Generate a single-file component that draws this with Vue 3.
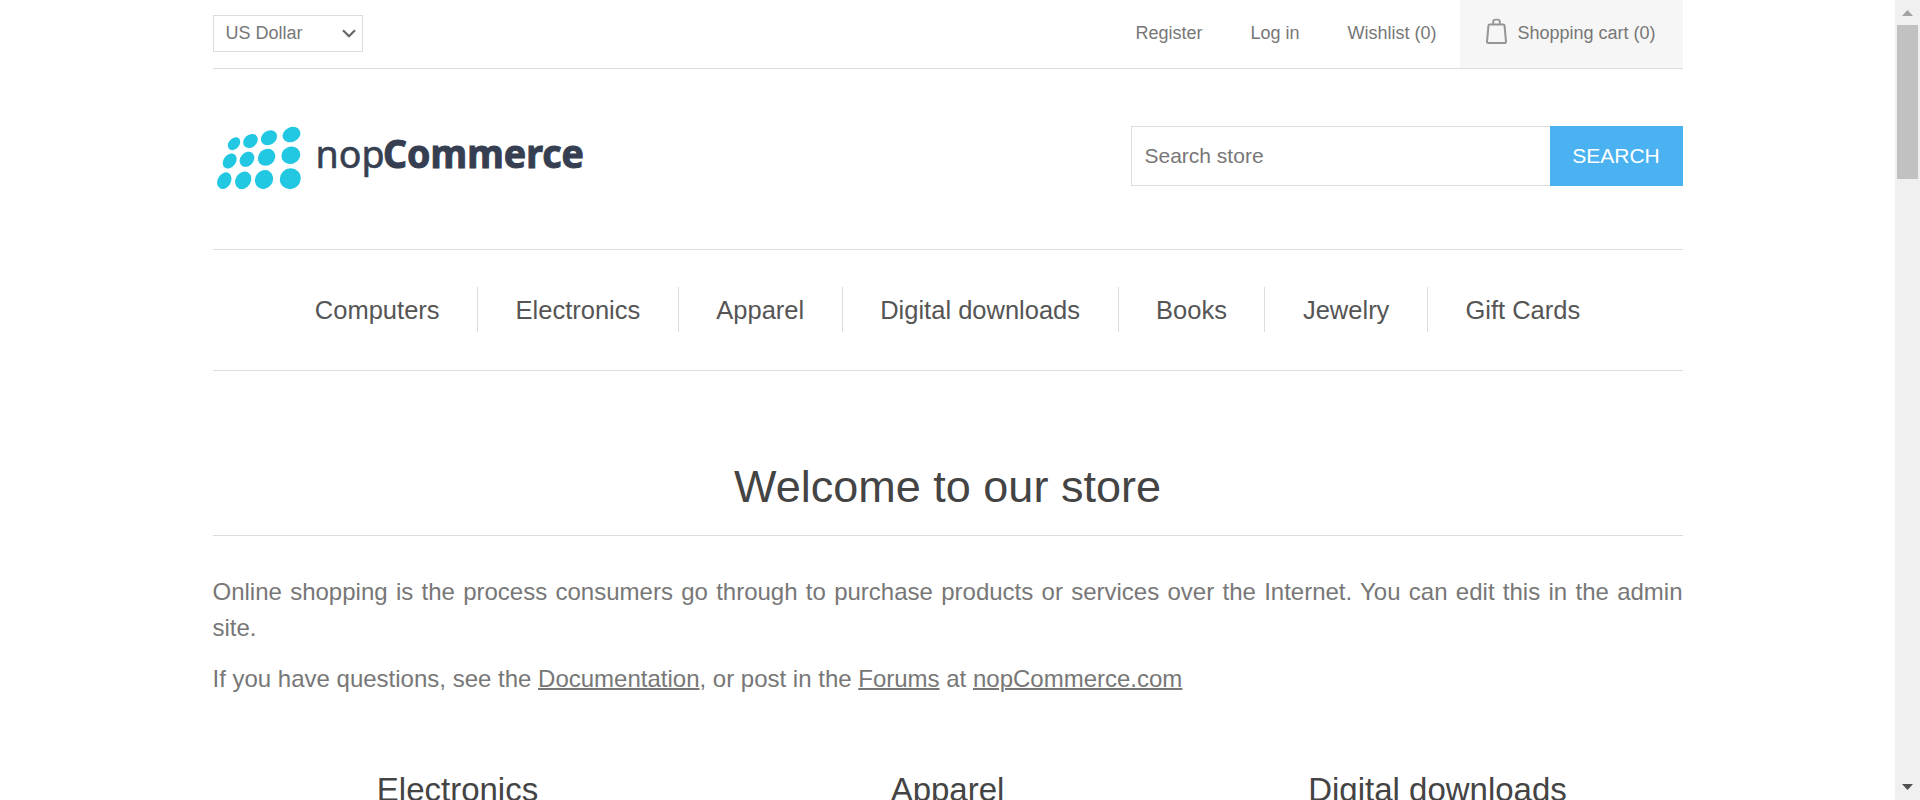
<script setup>
const links = ['Register', 'Log in', 'Wishlist (0)']
const menu = ['Computers', 'Electronics', 'Apparel', 'Digital downloads', 'Books', 'Jewelry', 'Gift Cards']
const categories = ['Electronics', 'Apparel', 'Digital downloads']
const dots = [
  [34, 143.7, 5.3, 7.2, 42], [50.5, 141, 6.3, 8, 48], [69, 137.8, 7, 8.6, 55], [91.5, 134.6, 7.4, 9.2, 65],
  [29.7, 161, 6.1, 8.2, 38], [47, 159.3, 6.6, 8.3, 42], [66.6, 157.3, 8, 9.2, 48], [90.8, 155.3, 8.5, 9.6, 65],
  [24.3, 180.7, 6.6, 8.8, 30], [43.2, 180.3, 7.6, 9.3, 32], [64, 179.5, 8.8, 9.8, 35], [90.3, 178.7, 10.2, 10.7, 45],
]
</script>

<template>
  <div class="window">
    <div class="viewport">
      <div class="page">
        <header class="top">
          <div class="currency">
            <span>US Dollar</span>
            <svg width="14" height="9" viewBox="0 0 14 9"><path d="M1 1.2 7 7.2 13 1.2" fill="none" stroke="#666" stroke-width="2.2" /></svg>
          </div>
          <nav class="links">
            <a v-for="l in links" :key="l">{{ l }}</a>
            <a class="cart">
              <svg width="21" height="28" viewBox="0 0 21 28" fill="none" stroke="#959595">
                <path d="M3.6 7.4H17.4Q18.4 7.4 18.5 8.4L20 24.8Q20 26 18.8 26H2.2Q1 26 1 24.8L2.5 8.4Q2.6 7.4 3.6 7.4Z" stroke-width="2" />
                <path d="M7.2 7V4.8Q7.2 2.6 9.4 2.6H11.6Q13.8 2.6 13.8 4.8V7" stroke-width="1.9" />
              </svg>
              <span>Shopping cart (0)</span>
            </a>
          </nav>
        </header>
        <div class="brand">
          <svg class="logo" width="375" height="75" viewBox="0 120 375 75">
            <ellipse v-for="(d, i) in dots" :key="i" :cx="d[0] - 13" :cy="d[1]" :rx="d[2]" :ry="d[3]" :transform="`rotate(${d[4]} ${d[0] - 13} ${d[1]})`" fill="#22c7e2" />
            <text class="nop" x="102.5" y="167.8" textLength="69" lengthAdjust="spacingAndGlyphs">nop</text>
            <text class="commerce" x="170" y="167.8" textLength="201" lengthAdjust="spacingAndGlyphs">Commerce</text>
          </svg>
          <div class="search">
            <div class="field">Search store</div>
            <div class="go">SEARCH</div>
          </div>
        </div>
        <nav class="menu">
          <div v-for="m in menu" :key="m" class="item">{{ m }}</div>
        </nav>
        <h1>Welcome to our store</h1>
        <div class="copy">
          <p>Online shopping is the process consumers go through to purchase products or services over the Internet. You can edit this in the admin site.</p>
          <p>If you have questions, see the <a>Documentation</a>, or post in the <a>Forums</a> at <a>nopCommerce.com</a></p>
        </div>
        <div class="cats">
          <h2 v-for="c in categories" :key="c">{{ c }}</h2>
        </div>
      </div>
    </div>
    <div class="scrollbar">
      <svg width="11" height="6" viewBox="0 0 11 6"><path d="M5.5 0 11 6H0Z" fill="#a3a3a3" /></svg>
      <div class="thumb"></div>
      <svg class="down" width="11" height="6" viewBox="0 0 11 6"><path d="M0 0H11L5.5 6Z" fill="#505050" /></svg>
    </div>
  </div>
</template>

<style>
html, body { overflow: hidden; background: #fff; }
</style>

<style scoped>
* { box-sizing: border-box; }
.window { display: flex; height: 800px; overflow: hidden; font-family: "Liberation Sans", Arial, sans-serif; font-size: 21px; color: #777; }
.viewport { width: 1895px; padding-left: 212.5px; overflow: hidden; }
.page { width: 1470px; }
.top { height: 69px; border-bottom: 1px solid #ddd; display: flex; justify-content: space-between; font-size: 18px; }
.currency { width: 150px; height: 37px; margin-top: 15px; border: 1px solid #ddd; padding: 0 6px 0 12px; display: flex; align-items: center; justify-content: space-between; }
.links { display: flex; line-height: 66px; gap: 48px; white-space: nowrap; }
.cart { display: flex; width: 223px; height: 68px; margin-left: -25px; padding-left: 26.5px; background: #f6f6f6; gap: 10.5px; }
.cart svg { margin-top: 17px; }
.brand { height: 181px; border-bottom: 1px solid #ddd; display: flex; justify-content: space-between; padding-top: 51px; }
.logo { display: block; overflow: visible; }
.logo text { fill: #363f51; stroke: #363f51; stroke-width: 0.6px; font-family: "Noto Sans", "Open Sans", sans-serif; font-size: 38.5px; }
.logo .commerce { font-weight: 700; stroke-width: 1px; }
.search { display: flex; width: 552px; height: 60px; margin-top: 6px; }
.field { flex: 1; border: 1px solid #ddd; border-right: 0; padding-left: 13px; line-height: 58px; }
.go { width: 133px; background: #4ab2f1; color: #fff; text-align: center; line-height: 59px; }
.menu { height: 121px; border-bottom: 1px solid #ddd; display: flex; justify-content: center; padding-top: 37px; font-size: 25.5px; color: #555; }
.item { height: 45px; line-height: 46px; padding: 0 37.5px; white-space: nowrap; }
.item + .item { border-left: 1px solid #ddd; }
h1 { margin: 75px 0 0; height: 90px; border-bottom: 1px solid #ddd; font-size: 45px; line-height: 82px; font-weight: 400; text-align: center; color: #444; }
.copy { padding-top: 38px; font-size: 24px; line-height: 36px; text-align: justify; }
.copy p { margin: 0 0 15px; }
.copy a { text-decoration: underline; text-decoration-thickness: 2px; }
.cats { display: flex; margin-top: 74px; }
h2 { flex: 1 0 490px; margin: 0; text-align: center; font-size: 33px; line-height: 38px; font-weight: 400; color: #444; white-space: nowrap; }
.scrollbar { width: 25px; height: 800px; background: #f0f0f0; display: flex; flex-direction: column; align-items: center; padding: 10px 0; }
.thumb { width: 21px; height: 154px; margin-top: 9px; background: #c1c1c1; }
.down { margin-top: auto; }
</style>
